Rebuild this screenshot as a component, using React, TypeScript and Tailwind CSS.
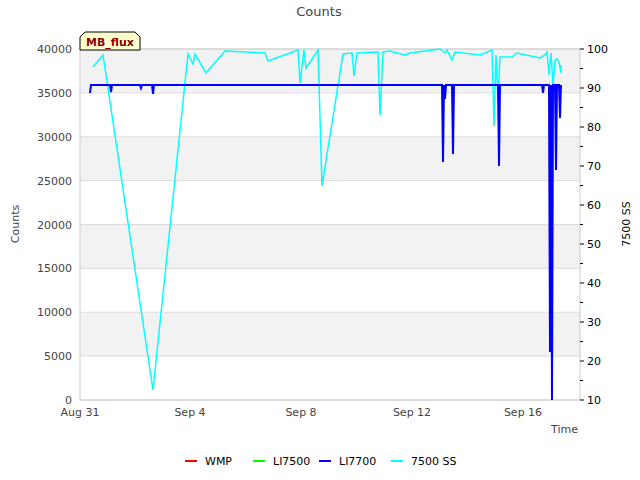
export default function App() {
  const F = "'DejaVu Sans', sans-serif";
  const yT = [0,5000,10000,15000,20000,25000,30000,35000,40000];
  const yp = (v:number)=>400 - v/40000*351;
  const rp = (v:number)=>400 - (v-10)/90*351;
  const cyan = "93,67 103,55 153,390 188,54 193,64 195,54 206,73 225,51 265,53 268,61 298,50 300,83 304,50 306,68 318,50 322,186 343,54 352,53 354,76 357,53 378,52 380,115 383,52 390,51 405,55 410,53 440,49 445,53 447,50 452,60 455,52 480,55 492,50 494,126 496,55 498,100 500,57 512,57 517,53 540,58 545,55 547,52 549,75 551,53 553,85 555,60 557,59 559,62 561,73 561,65";
  const blue = "90,93 91,85 110,85 111,92 112,85 140,85 141,88 142,85 152,85 153,94 154,85 442,85 443,162 444,85 445,99 446,85 452,85 453,154 454,85 498,85 499,166 500,85 542,85 543,93 544,85 549,85 550,352 551,85 552,400 553,85 555,85 556,170 557,85 559,85 560,118 561,85";
  return (
    <div className="w-[640px] h-[480px] bg-white relative" style={{fontFamily:F}}>
      <svg width="640" height="480" className="absolute inset-0" fontFamily={F}>
        <text x="319" y="16" textAnchor="middle" fontSize="13" fill="#444">Counts</text>
        {[35000,25000,15000,5000].map(v=>(<rect key={v} x="80" y={yp(v+5000)} width="500" height={yp(v)-yp(v+5000)} fill="#f2f2f2"/>))}
        {yT.map(v=>(<g key={v}><line x1="80" x2="580" y1={yp(v)} y2={yp(v)} stroke="#ddd"/><text x="72" y={yp(v)+4} textAnchor="end" fontSize="11" fill="#444">{v}</text></g>))}
        <rect x="80" y="49" width="500" height="351" fill="none" stroke="#ccc"/>
        {[10,20,30,40,50,60,70,80,90,100].map(v=>(<g key={v}><line x1="580" x2="584" y1={rp(v)} y2={rp(v)} stroke="#000"/><text x="587" y={rp(v)+4} fontSize="11" fill="#000">{v}</text></g>))}
        {[15,25,35,45,55,65,75,85,95].map(v=>(<line key={v} x1="580" x2="583" y1={rp(v)} y2={rp(v)} stroke="#000"/>))}
        {[["Aug 31",80],["Sep 4",190],["Sep 8",301],["Sep 12",412],["Sep 16",523]].map(([t,x])=>(<text key={t as string} x={x as number} y="416" textAnchor="middle" fontSize="11" fill="#444">{t}</text>))}
        <text x="578" y="433" textAnchor="end" fontSize="11" fill="#444">Time</text>
        <text transform="translate(19,224) rotate(-90)" textAnchor="middle" fontSize="11" fill="#444">Counts</text>
        <text transform="translate(630,224) rotate(-90)" textAnchor="middle" fontSize="11" fill="#000">7500 SS</text>
        <polyline points={cyan} fill="none" stroke="#00ffff" strokeWidth="1.5"/>
        <polyline points={blue} fill="none" stroke="#0000ff" strokeWidth="2"/>
        <path d="M80,50 L80,37 L85,32 L135,32 L140,37 L140,50 Z" fill="#ffffcc" stroke="#000"/>
        <text x="110" y="46" textAnchor="middle" fontSize="11" fontWeight="bold" fill="#8b0000">MB_flux</text>
        {[["WMP",185,"#ff0000"],["LI7500",253,"#00ff00"],["LI7700",319,"#0000ff"],["7500 SS",391,"#00ffff"]].map(([t,x,c])=>(<g key={t as string}><line x1={x as number} x2={(x as number)+12} y1="461" y2="461" stroke={c as string} strokeWidth="2"/><text x={(x as number)+20} y="465" fontSize="11" fill="#000">{t}</text></g>))}
      </svg>
    </div>
  );
}
